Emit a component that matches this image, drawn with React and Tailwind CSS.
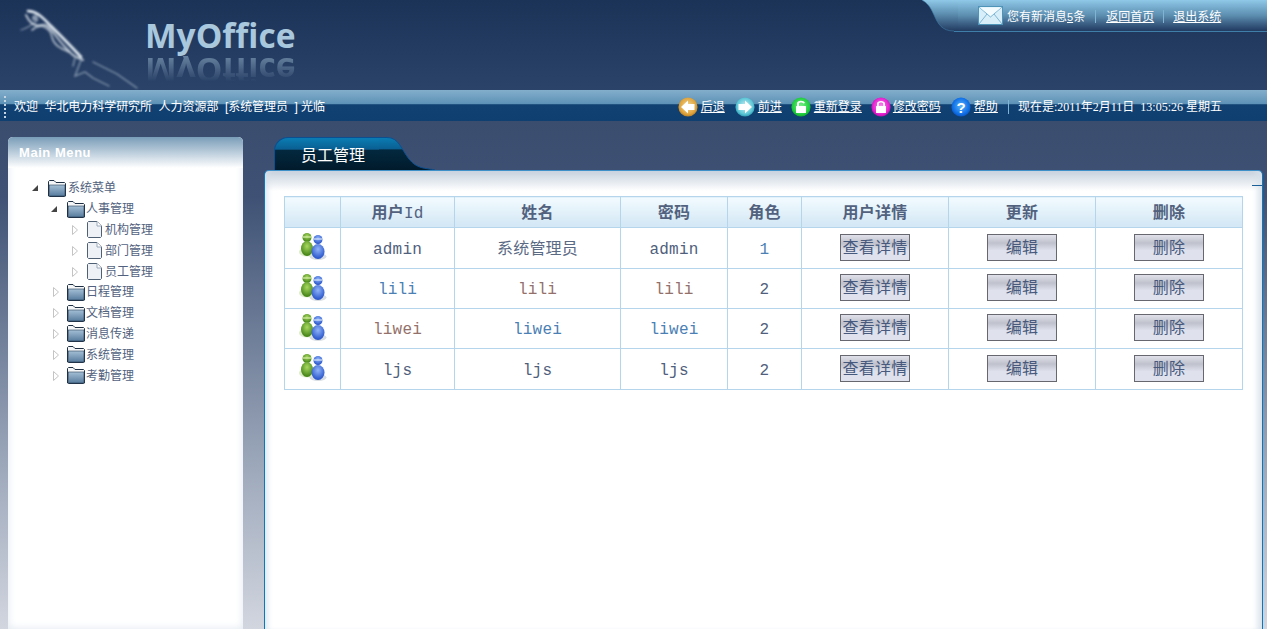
import React from 'react';

const cjk = 'font-["Liberation_Sans","Noto_Sans_CJK_SC",sans-serif]';

const Insect = () => (
  <svg width="130" height="90" viewBox="0 0 130 90" className="shrink-0">
    <defs>
      <filter id="soft"><feGaussianBlur stdDeviation="1" /></filter>
    </defs>
    <g fill="none" stroke="#e4ecf3" strokeLinecap="round" filter="url(#soft)">
      <path d="M13 9C22 9 28 16 36 24S54 42 66 55" strokeWidth="2.6" />
      <path d="M11 13C15 22 20 25 27 23S38 32 50 45 60 54 68 58" strokeWidth="2" opacity="0.75" />
      <path d="M17 28C26 20 35 26 37 35S46 46 54 50" strokeWidth="1.8" opacity="0.65" />
      <path d="M6 28C12 26 17 23 23 18" strokeWidth="1.2" opacity="0.5" />
      <circle cx="20" cy="16" r="3" fill="#cfdbe6" stroke="none" opacity="0.6" />
    </g>
    <g fill="none" stroke="#a9b9cb" strokeWidth="1.3" strokeLinecap="round" filter="url(#soft)" opacity="0.75">
      <path d="M66 58L60 74 70 70 78 76 94 84" />
      <path d="M78 60L102 72 122 86" />
      <path d="M60 56L58 64" />
    </g>
  </svg>
);

const Envelope = () => (
  <svg width="25" height="19" viewBox="0 0 25 19" className="shrink-0">
    <rect x="0.5" y="0.5" width="24" height="18" fill="#d8eef8" stroke="#4e93b8" />
    <path d="M1 1L12.5 11 24 1M1 18L9 8M24 18L16 8" fill="none" stroke="#7fb6d6" />
    <path d="M2 1.5H23L12.5 10Z" fill="#f4fbfe" />
  </svg>
);

const RoundIcon = ({ id, light, base, dark, children }) => (
  <svg width="20" height="20" viewBox="0 0 20 20" className="shrink-0">
    <defs>
      <radialGradient id={id} cx="50%" cy="45%" r="60%">
        <stop offset="0%" stopColor={light} />
        <stop offset="70%" stopColor={base} />
        <stop offset="100%" stopColor={dark} />
      </radialGradient>
    </defs>
    <circle cx="10" cy="10" r="9.6" fill={`url(#${id})`} />
    {children}
  </svg>
);

const LockShape = ({ open }) => (
  <g fill="#fff">
    <rect x="5" y="9" width="10" height="7" rx="0.5" />
    <path
      d={open ? 'M6 9V6.5C6 3 13 3 14 6L12.4 6.6C12 5 8 5 8 6.5V9Z' : 'M6 9V6.5C6 3 14 3 14 6.5V9H12.2V6.8C12 5 8 5 7.8 6.8V9Z'}
    />
  </g>
);

const toolItems = [
  {
    label: '后退',
    cls: 'gap-[3px]',
    icon: (
      <RoundIcon id="ic-back" light="#f2dba0" base="#e0a43c" dark="#a8701a">
        <path d="M3 10L10 3.5V7H16.5V13H10V16.5Z" fill="#fff" />
      </RoundIcon>
    ),
  },
  {
    label: '前进',
    cls: 'ml-[10px] gap-[3px]',
    icon: (
      <RoundIcon id="ic-fwd" light="#c8f0f4" base="#5cc6d6" dark="#1a8aa4">
        <path d="M17 10L10 3.5V7H3.5V13H10V16.5Z" fill="#fff" />
      </RoundIcon>
    ),
  },
  {
    label: '重新登录',
    cls: 'ml-[9px] gap-[3px]',
    icon: (
      <RoundIcon id="ic-login" light="#7df08a" base="#22d040" dark="#0c9a24">
        <LockShape open />
      </RoundIcon>
    ),
  },
  {
    label: '修改密码',
    cls: 'ml-[9px] gap-[2px]',
    icon: (
      <RoundIcon id="ic-pass" light="#f88cf0" base="#e61fd0" dark="#a40c98">
        <LockShape />
      </RoundIcon>
    ),
  },
  {
    label: '帮助',
    cls: 'ml-[10px] gap-[3px]',
    icon: (
      <RoundIcon id="ic-help" light="#5cb4f8" base="#1070e8" dark="#0a4cb0">
        <text x="10" y="15.5" textAnchor="middle" fontSize="15" fontWeight="700" fill="#fff" fontFamily="Liberation Sans">?</text>
      </RoundIcon>
    ),
  },
];

const Header = () => (
  <header className="flex h-[90px] justify-between bg-gradient-to-b from-[#1c3358] to-[#2b4369]">
    <div className="flex pl-[15px] pt-[2px]">
      <Insect />
      <div className="pt-[18px]">
        <div className='h-[30px] font-["Open_Sans",sans-serif] text-[33.5px] font-bold leading-[30px] text-[#a9c8de]'>MyOffice</div>
        <div
          aria-hidden="true"
          className='mt-[6px] h-[30px] -scale-y-100 font-["Open_Sans",sans-serif] text-[33.5px] font-bold leading-[30px] text-[#a9c8de] opacity-50 [mask-image:linear-gradient(to_top,black,transparent_85%)]'
        >
          MyOffice
        </div>
      </div>
    </div>
    <div className="flex h-[32px] w-[345px]">
      <svg width="36" height="32" viewBox="0 0 36 32" className="shrink-0">
        <defs>
          <linearGradient id="topTab" x1="0" y1="0" x2="0" y2="1">
            <stop offset="0%" stopColor="#8fc8e8" />
            <stop offset="45%" stopColor="#5c8eb0" />
            <stop offset="100%" stopColor="#223a60" />
          </linearGradient>
        </defs>
        <path d="M0 0H36V31H32C20 31 16 24 12 15S5 3 0 0Z" fill="url(#topTab)" />
        <path d="M32 31.5H36" stroke="#3e7ea8" />
        <path d="M0 0C5 3 8 6 12 15S20 31 32 31" fill="none" stroke="#3e7ea8" strokeWidth="0.6" />
      </svg>
      <div className={`flex flex-1 items-center border-b border-[#3e7ea8] bg-gradient-to-b from-[#8fc8e8] via-[#5c8eb0] to-[#223a60] pl-[20px] text-[12px] text-white ${cjk}`}>
        <Envelope />
        <span className="ml-[4px] mt-[2px]">您有新消息<span className="text-[11px] underline">5</span>条</span>
        <span className="mx-[10px] mt-[2px] h-[13px] w-[1px] bg-[#7fb4d4]" />
        <a className="mt-[2px] underline">返回首页</a>
        <span className="mx-[9px] mt-[2px] h-[13px] w-[1px] bg-[#7fb4d4]" />
        <a className="mt-[2px] underline">退出系统</a>
      </div>
    </div>
  </header>
);

const ToolBar = () => (
  <div className={`flex h-[31px] items-center justify-between bg-[linear-gradient(#83aecb,#5c91b6_46%,#114172_47%,#0f3f70)] pl-[4px] pr-[45px] pt-[3px] text-[12px] text-white ${cjk}`}>
    <div className="flex items-center">
      <span className="h-[22px] w-[2px] border-l-2 border-dotted border-[#c4d4e0]" />
      <span className="ml-[8px] whitespace-pre tracking-[-0.05px]">欢迎  华北电力科学研究所  人力资源部  [系统管理员  ] 光临</span>
    </div>
    <div className="flex items-center">
      {toolItems.map((item) => (
        <div key={item.label} className={`flex items-center ${item.cls}`}>
          {item.icon}
          <a className="underline">{item.label}</a>
        </div>
      ))}
      <span className="ml-[10px] mr-[9px] h-[14px] w-[1px] bg-[#7fb4d4]" />
      <span className='whitespace-pre font-["Liberation_Serif","Noto_Sans_CJK_SC",serif]'>现在是:2011年2月11日  13:05:26 星期五</span>
    </div>
  </div>
);

const Folder = () => (
  <svg width="18" height="17" viewBox="0 0 18 17" className="shrink-0">
    <defs>
      <linearGradient id="folderFill" x1="0" y1="0" x2="0" y2="1">
        <stop offset="0%" stopColor="#a4bfd6" />
        <stop offset="100%" stopColor="#587c9e" />
      </linearGradient>
    </defs>
    <path d="M0.5 16V1.5L1.5 0.5H6L8 2.5H16.5L17.5 3.5V16L16.5 16.5H1.5Z" fill="#f4f6f8" stroke="#1f3044" />
    <rect x="1.5" y="5" width="15.5" height="11" fill="url(#folderFill)" stroke="#2a4058" strokeWidth="0.6" />
  </svg>
);

const FileIcon = () => (
  <svg width="15" height="17" viewBox="0 0 15 17" className="shrink-0">
    <path d="M1.5 0.5H10L14.5 5V15.5L13.5 16.5H1.5L0.5 15.5V1.5Z" fill="#eef2f7" stroke="#4f5f74" />
    <path d="M10 0.5V5H14.5" fill="#fff" stroke="#9aa8b8" />
  </svg>
);

const Arrow = ({ open }) =>
  open ? (
    <svg width="6" height="6" viewBox="0 0 6 6" className="shrink-0">
      <path d="M6 0V6H0Z" fill="#444" />
    </svg>
  ) : (
    <svg width="6" height="10" viewBox="0 0 6 10" className="shrink-0">
      <path d="M0.5 0.5L5.5 5 0.5 9.5Z" fill="#fff" stroke="#c4c4c4" />
    </svg>
  );

const treeRows = [
  { label: '系统菜单', level: 0, open: true },
  { label: '人事管理', level: 1, open: true },
  { label: '机构管理', level: 2, file: true },
  { label: '部门管理', level: 2, file: true },
  { label: '员工管理', level: 2, file: true },
  { label: '日程管理', level: 1 },
  { label: '文档管理', level: 1 },
  { label: '消息传递', level: 1 },
  { label: '系统管理', level: 1 },
  { label: '考勤管理', level: 1 },
];

const levelPad = ['pl-[24px]', 'pl-[43px]', 'pl-[64px]'];

const Sidebar = () => (
  <aside className={`mt-[16px] ml-[8px] w-[235px] shrink-0 rounded-t-[5px] bg-white shadow-[inset_0_0_8px_#dfe7ef] ${cjk}`}>
    <div className='h-[31px] rounded-t-[5px] bg-gradient-to-b from-[#7a9db8] to-white pl-[11px] pt-[8px] font-["Liberation_Sans",sans-serif] text-[13px] font-bold leading-[15px] tracking-[0.55px] text-white'>
      Main Menu
    </div>
    <div className="pt-[10px]">
      {treeRows.map((row) => (
        <div key={row.label} className={`flex h-[20.8px] items-center text-[12px] text-[#52627e] ${levelPad[row.level]}`}>
          <span className={`flex w-[16px] justify-start ${row.open || row.file ? '' : 'pl-[2px]'}`}>
            <Arrow open={row.open} />
          </span>
          {row.file ? (
            <span className="-ml-[1px] flex items-center gap-[3px]">
              <FileIcon />
              {row.label}
            </span>
          ) : (
            <span className={`flex items-center ${row.level === 0 ? 'gap-[2px]' : 'gap-[1px]'}`}>
              <Folder />
              {row.label}
            </span>
          )}
        </div>
      ))}
    </div>
  </aside>
);

const UsersIcon = () => (
  <svg width="28" height="27" viewBox="0 0 28 27" className="mx-auto block">
    <defs>
      <radialGradient id="g1" cx="50%" cy="35%" r="65%">
        <stop offset="0%" stopColor="#a8d860" />
        <stop offset="100%" stopColor="#3f7f12" />
      </radialGradient>
      <radialGradient id="b1" cx="50%" cy="35%" r="65%">
        <stop offset="0%" stopColor="#8fb4f8" />
        <stop offset="100%" stopColor="#2450c8" />
      </radialGradient>
    </defs>
    <ellipse cx="19" cy="23.5" rx="8.5" ry="3.5" fill="#d8dde2" />
    <ellipse cx="8" cy="19" rx="8" ry="4.5" fill="#dcecc8" />
    <circle cx="8" cy="4.5" r="4.5" fill="url(#g1)" />
    <path d="M3.5 4H12.5" stroke="#d8f0a8" strokeWidth="1.2" />
    <ellipse cx="8" cy="15.5" rx="6" ry="7.5" fill="url(#g1)" />
    <circle cx="19" cy="6.5" r="4.5" fill="url(#b1)" />
    <path d="M14.5 6H23.5" stroke="#d8e6fc" strokeWidth="1.2" />
    <ellipse cx="19" cy="18.5" rx="6.5" ry="7.5" fill="url(#b1)" />
  </svg>
);

const headers = ['', <>用户<span className="font-normal">Id</span></>, '姓名', '密码', '角色', '用户详情', '更新', '删除'];
const colWidths = ['w-[56px]', 'w-[114px]', 'w-[166px]', 'w-[107px]', 'w-[74px]', 'w-[147px]', 'w-[147px]', 'w-[147px]'];

const gray = 'text-[#50607c]';
const blue = 'text-[#4b80b5]';
const brown = 'text-[#94706a]';

const rows = [
  { h: 'h-[41px]', cells: [['admin', gray], ['系统管理员', 'text-[#5a6a85]'], ['admin', gray], ['1', blue]] },
  { h: 'h-[40px]', cells: [['lili', blue], ['lili', brown], ['lili', brown], ['2', gray]] },
  { h: 'h-[40px]', cells: [['liwei', brown], ['liwei', blue], ['liwei', blue], ['2', gray]] },
  { h: 'h-[41px]', cells: [['ljs', gray], ['ljs', gray], ['ljs', gray], ['2', gray]] },
];

const GridButton = ({ children }) => (
  <button className={`h-[27px] w-[70px] whitespace-nowrap border border-[#67676f] bg-[linear-gradient(#e0e1ea,#bfc1cc_32%,#dfe1ec_62%,#dfe1ec)] pt-[1px] text-[16px] leading-[24px] text-[#475a7e] ${cjk}`}>
    {children}
  </button>
);

const cellClass = 'border border-[#b4d5ec] p-0 text-center align-middle';

const UserTable = () => (
  <table className={`w-[959px] table-fixed border-collapse font-["Liberation_Mono","Noto_Sans_CJK_SC",monospace] text-[16px] tracking-[0.2px] ${gray}`}>
    <colgroup>
      {colWidths.map((w, i) => (
        <col key={i} className={w} />
      ))}
    </colgroup>
    <thead>
      <tr className="h-[31px]">
        {headers.map((h, i) => (
          <th key={i} className={`${cellClass} bg-[linear-gradient(#f2fbff,#d5e8f5_90%)] pt-[3px] font-bold text-[#52627e]`}>
            {h}
          </th>
        ))}
      </tr>
    </thead>
    <tbody>
      {rows.map((row, i) => (
        <tr key={i} className={row.h}>
          <td className={`${cellClass} pb-[3px]`}>
            <UsersIcon />
          </td>
          {row.cells.map(([text, color], j) => (
            <td key={j} className={`${cellClass} pt-[3px] ${color}`}>
              {text}
            </td>
          ))}
          <td className={`${cellClass} pb-[2px]`}>
            <GridButton>查看详情</GridButton>
          </td>
          <td className={`${cellClass} pb-[2px]`}>
            <GridButton>编辑</GridButton>
          </td>
          <td className={`${cellClass} pb-[2px]`}>
            <GridButton>删除</GridButton>
          </td>
        </tr>
      ))}
    </tbody>
  </table>
);

const Main = () => (
  <main className="ml-[21px] mr-[4px] flex min-w-0 flex-1 flex-col pt-[16px]">
    <div className="ml-[10px] flex h-[33px] shrink-0">
      <div className={`w-[105px] rounded-tl-[14px] border-l border-t border-[#0b4f90] bg-[linear-gradient(#0a7db4,#0a5f92_35%,#03293f_38%,#011a2b)] pl-[26px] pt-[6px] text-[16px] leading-[24px] text-white ${cjk}`}>
        员工管理
      </div>
      <svg width="56" height="33" viewBox="0 0 56 33" className="shrink-0">
        <defs>
          <linearGradient id="tabEnd" x1="0" y1="0" x2="0" y2="1">
            <stop offset="0%" stopColor="#0a7db4" />
            <stop offset="35%" stopColor="#0a5f92" />
            <stop offset="38%" stopColor="#03293f" />
            <stop offset="100%" stopColor="#011a2b" />
          </linearGradient>
        </defs>
        <path d="M0 0.5H8C20 0.5 22 12 30 22S46 31 56 33H0Z" fill="url(#tabEnd)" />
        <path d="M0 0.5H8C20 0.5 22 12 30 22S46 31 56 33" fill="none" stroke="#0b4f90" />
      </svg>
    </div>
    <section className="relative flex-1 rounded-t-[5px] border-x-[1.5px] border-t border-[#0a78bc] border-t-[#3e90c8] bg-[linear-gradient(#c6d1dd,#ffffff_20px)] pl-[19px] pt-[25px] shadow-[inset_6px_0_6px_-4px_#d7e1ea,inset_-8px_0_6px_-4px_#d7e1ea]">
      <UserTable />
      <span className="absolute right-0 top-[14px] h-[1px] w-[10px] bg-[#1a5f98]" />
    </section>
  </main>
);

export default function App() {
  return (
    <div className="flex h-screen flex-col overflow-hidden">
      <Header />
      <ToolBar />
      <div className="flex min-h-0 flex-1 bg-[linear-gradient(#3a4d6f,#3f5275_15%,#a0abbd_70%,#d2d6df)]">
        <Sidebar />
        <Main />
      </div>
    </div>
  );
}
